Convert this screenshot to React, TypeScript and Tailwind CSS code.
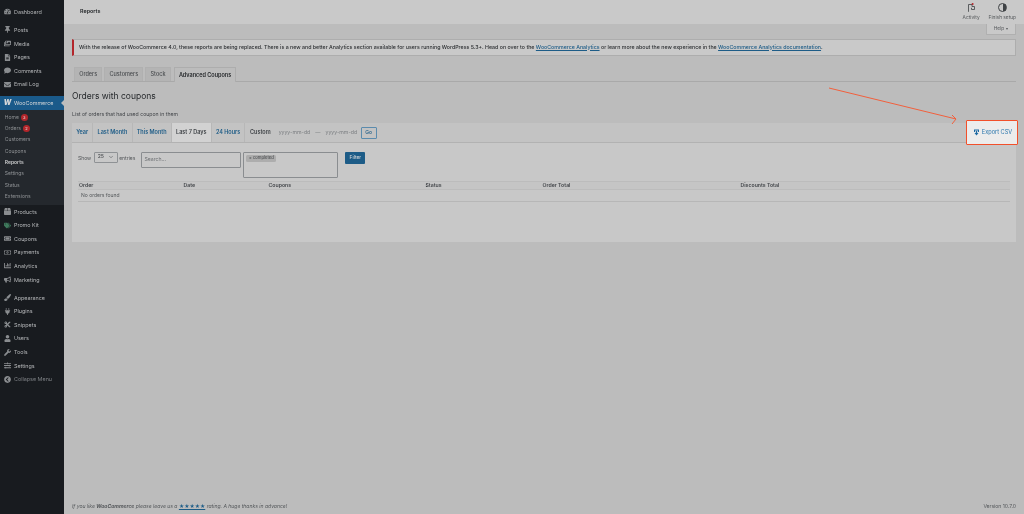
import { ChevronDown } from "lucide-react";
import type { IconType } from "react-icons";
import {
  FaBox,
  FaBullhorn,
  FaChartBar,
  FaComment,
  FaCut,
  FaEnvelope,
  FaFileAlt,
  FaImages,
  FaPaintBrush,
  FaPlug,
  FaRegMoneyBillAlt,
  FaSlidersH,
  FaTachometerAlt,
  FaThumbtack,
  FaTicketAlt,
  FaUser,
  FaWrench,
  FaChevronCircleLeft,
  FaTags,
} from "react-icons/fa";

function MenuItem({
  icon: Icon,
  label,
  dim,
  iconClass = "text-[#8a8d90]",
}: {
  icon: IconType;
  label: string;
  dim?: boolean;
  iconClass?: string;
}) {
  return (
    <div className={`flex h-[13.6px] items-center ${dim ? "text-[#7d8084]" : "text-[#b4b6b8]"}`}>
      <span className="flex w-[14px] justify-center pl-[1px]">
        <Icon className={`size-[7px] ${iconClass}`} />
      </span>
      <span className="text-[5.4px]">{label}</span>
    </div>
  );
}

function SubItem({ label, badge, active }: { label: string; badge?: string; active?: boolean }) {
  return (
    <div
      className={`flex h-[11.3px] items-center gap-[2px] pl-[4.8px] text-[5px] ${
        active ? "font-semibold text-[#c9cacb]" : "text-[#8f9295]"
      }`}
    >
      {label}
      {badge && (
        <span className="flex size-[7px] items-center justify-center rounded-full bg-[#b3262b] text-[4px] text-[#e6e6e6]">
          {badge}
        </span>
      )}
    </div>
  );
}

function RangeTab({ label, active }: { label: string; active?: boolean }) {
  return (
    <div
      className={`flex h-full items-center border-r border-[#b7b7b7] px-[4.2px] text-[5.5px] font-semibold ${
        active ? "bg-[#d2d2d2] text-[#3f4347]" : "text-[#1d5c87]"
      }`}
    >
      {label}
    </div>
  );
}

const navTabs = ["Orders", "Customers", "Stock"];

export default function App() {
  return (
    <div
      className="relative flex h-[514px] w-[1024px] overflow-hidden bg-[#bcbcbc] text-[#2c2f32] blur-[0.3px]"
      style={{ fontFamily: "Inter, 'Liberation Sans', sans-serif" }}
    >
      {/* sidebar */}
      <aside className="w-[64px] shrink-0 bg-[#181b1f] pt-[5px]">
        <MenuItem icon={FaTachometerAlt} label="Dashboard" />
        <div className="mt-[4.6px]">
          <MenuItem icon={FaThumbtack} label="Posts" />
          <MenuItem icon={FaImages} label="Media" />
          <MenuItem icon={FaFileAlt} label="Pages" />
          <MenuItem icon={FaComment} label="Comments" />
          <MenuItem icon={FaEnvelope} label="Email Log" />
        </div>
        <div className="relative mt-[4.8px] flex h-[13.6px] items-center bg-[#1a5a8a] text-[#d4d6d8]">
          <span className="flex w-[14px] justify-center pl-[1px] text-[7px] font-black italic leading-none text-[#d4d6d8]">
            W
          </span>
          <span className="text-[5.4px]">WooCommerce</span>
          <span className="absolute right-0 top-[3.6px] border-y-[3px] border-r-[3px] border-y-transparent border-r-[#bcbcbc]" />
        </div>
        <div className="bg-[#24282d] pb-[2.5px] pt-[2.4px]">
          <SubItem label="Home" badge="3" />
          <SubItem label="Orders" badge="2" />
          <SubItem label="Customers" />
          <SubItem label="Coupons" />
          <SubItem label="Reports" active />
          <SubItem label="Settings" />
          <SubItem label="Status" />
          <SubItem label="Extensions" />
        </div>
        <MenuItem icon={FaBox} label="Products" />
        <MenuItem icon={FaTags} label="Promo Kit" iconClass="text-[#3f7a5c]" />
        <MenuItem icon={FaTicketAlt} label="Coupons" />
        <MenuItem icon={FaRegMoneyBillAlt} label="Payments" />
        <MenuItem icon={FaChartBar} label="Analytics" />
        <MenuItem icon={FaBullhorn} label="Marketing" />
        <div className="mt-[4.5px]">
          <MenuItem icon={FaPaintBrush} label="Appearance" />
          <MenuItem icon={FaPlug} label="Plugins" />
          <MenuItem icon={FaCut} label="Snippets" />
          <MenuItem icon={FaUser} label="Users" />
          <MenuItem icon={FaWrench} label="Tools" />
          <MenuItem icon={FaSlidersH} label="Settings" />
          <MenuItem icon={FaChevronCircleLeft} label="Collapse Menu" dim />
        </div>
      </aside>

      <main className="flex min-w-0 flex-1 flex-col">
        {/* top bar */}
        <header className="flex h-[24px] shrink-0 items-center justify-between bg-[#c9c9c9] pl-[16px] pr-[8px]">
          <span className="-mt-[1px] text-[5.4px] font-semibold text-[#25282b]">Reports</span>
          <div className="flex gap-[9px] text-[4.8px] text-[#55585b]">
            <div className="flex flex-col items-center gap-[2px]">
              <svg className="size-[9px]" viewBox="0 0 9 9" fill="none" stroke="#3f4245" strokeWidth="0.8">
                <path d="M1.5 8.8V1.5H5V3.5H7.5V6.5H4.5V4.8" />
                <circle cx="5.6" cy="1" r="1" fill="#b3262b" stroke="none" />
              </svg>
              Activity
            </div>
            <div className="flex flex-col items-center gap-[2px]">
              <span className="size-[9px] rounded-full border border-[#3f4245] bg-[linear-gradient(90deg,transparent_50%,#3f4245_50%)]" />
              Finish setup
            </div>
          </div>
        </header>

        <div className="flex flex-1 flex-col px-[8px]">
          <div className="flex justify-end">
            <div className="flex h-[11px] w-[30px] items-center justify-center gap-[2px] rounded-b-[1px] border-x border-b border-[#b0b0b0] bg-[#c9c9c9] text-[4.8px] text-[#55585b]">
              Help
              <span className="border-x-[1.5px] border-t-[2px] border-x-transparent border-t-[#55585b]" />
            </div>
          </div>

          {/* notice */}
          <div className="mt-[4px] flex h-[17px] items-center border border-l-2 border-[#adadad] border-l-[#b3262b] bg-[#c9c9c9] pl-[5px] text-[5.27px] font-medium text-[#2c2f32]">
            <span>
              With the release of WooCommerce 4.0, these reports are being replaced. There is a new and better
              Analytics section available for users running WordPress 5.3+. Head on over to the{" "}
              <span className="text-[#1d5c87] underline">WooCommerce Analytics</span> or learn more about the new
              experience in the <span className="text-[#1d5c87] underline">WooCommerce Analytics documentation</span>.
            </span>
          </div>

          {/* tabs */}
          <div className="mt-[11px] flex h-[15px] items-end gap-[2px] border-b border-[#a9a9a9] pl-[2px]">
            {navTabs.map((tab) => (
              <div
                key={tab}
                className="flex h-[14px] items-center border border-b-0 border-[#b0b0b0] bg-[#b4b4b4] px-[4.2px] text-[5.5px] font-medium text-[#4a4d50]"
              >
                {tab}
              </div>
            ))}
            <div className="-mb-px ml-[1px] flex h-[15px] items-center border border-b-0 border-[#adadad] bg-[#bcbcbc] px-[4.2px] text-[5.5px] font-semibold text-[#1f2225]">
              Advanced Coupons
            </div>
          </div>

          <h1 className="mt-[8px] text-[8.5px] leading-[12px] text-[#25282b]">Orders with coupons</h1>
          <p className="mt-[9px] text-[5.15px] leading-[7px] text-[#43464a]">
            List of orders that had used coupon in them
          </p>

          {/* report panel */}
          <section className="mt-[5px] h-[119px] bg-[#c8c8c8]">
            <div className="flex h-[20px] items-center border-b border-[#b2b2b2] bg-[#c3c3c3]">
              <RangeTab label="Year" />
              <RangeTab label="Last Month" />
              <RangeTab label="This Month" />
              <RangeTab label="Last 7 Days" active />
              <RangeTab label="24 Hours" />
              <span className="ml-[4.5px] text-[5.5px] font-semibold text-[#3f4347]">Custom</span>
              <span className="ml-[8px] text-[5.2px] text-[#7a7d80]">yyyy-mm-dd</span>
              <span className="mx-[5px] text-[5.2px] text-[#7a7d80]">—</span>
              <span className="text-[5.2px] text-[#7a7d80]">yyyy-mm-dd</span>
              <span className="ml-[3.5px] flex h-[12px] w-[16px] items-center justify-center rounded-[1px] border border-[#5b8bad] text-[5px] font-medium text-[#1d5c87]">
                Go
              </span>
            </div>

            <div className="px-[6px]">
              <div className="mt-[8.5px] flex h-[26px] items-start">
                <span className="mt-[3.5px] text-[5px] text-[#55585b]">Show</span>
                <span className="ml-[2.5px] flex h-[11px] w-[24px] items-center justify-between rounded-[1px] border border-[#8f9295] px-[3px] text-[5.2px] text-[#43464a]">
                  25
                  <ChevronDown className="size-[6px]" />
                </span>
                <span className="ml-[1.5px] mt-[3.5px] text-[5px] text-[#55585b]">entries</span>
                <span className="ml-[6px] flex h-[16px] w-[100px] items-center rounded-[1px] border border-[#8a8d90] px-[2px] text-[5.2px] text-[#6f7275]">
                  Search...
                </span>
                <div className="ml-[2px] h-[26px] w-[95px] rounded-[1px] border border-[#8a8d90] p-[2px]">
                  <span className="flex h-[7px] w-[30px] items-center justify-center rounded-[1.5px] bg-[#adadad] text-[4.2px] text-[#3f4245]">
                    × completed
                  </span>
                </div>
                <span className="ml-[7px] flex h-[12px] w-[20px] items-center justify-center rounded-[1px] bg-[#1d5c87] text-[4.8px] font-medium text-[#d4d6d8]">
                  Filter
                </span>
              </div>

              <div className="mt-[3.5px] grid h-[9px] grid-cols-[104.5px_85px_157px_117px_198px_1fr] items-center border-y border-[#bcbcbc] bg-[#c5c5c5] pl-[1px] text-[5.2px] font-semibold text-[#43464a]">
                <span>Order</span>
                <span>Date</span>
                <span>Coupons</span>
                <span>Status</span>
                <span>Order Total</span>
                <span>Discounts Total</span>
              </div>
              <div className="flex h-[12px] items-center border-b border-[#b7b7b7] pl-[3px] text-[5px] text-[#55585b]">
                No orders found
              </div>
            </div>
          </section>

          {/* footer */}
          <footer className="mt-auto flex h-[11px] items-start justify-between text-[5.05px] text-[#55585b]">
            <span className="italic">
              If you like <b>WooCommerce</b> please leave us a{" "}
              <span className="not-italic text-[#1d5c87] underline">★★★★★</span> rating. A huge thanks in advance!
            </span>
            <span>Version 10.7.0</span>
          </footer>
        </div>
      </main>

      {/* annotation over the screenshot */}
      <div className="absolute left-[966px] top-[120px] flex h-[25px] w-[52px] items-center justify-center gap-[2px] rounded-[1px] border-[1.5px] border-[#f2502b] bg-[#ececec] pl-[1px] text-[5.6px] text-[#2a76ad]">
        <svg className="size-[7px]" viewBox="0 0 7 7" fill="#1d6aa3">
          <path d="M1 0.5H6V3H5V1.5H2V3H1Z" />
          <path d="M2.8 1.8H4.2V4H5.5L3.5 6.6L1.5 4H2.8Z" />
        </svg>
        Export CSV
      </div>
      <svg className="absolute left-[825px] top-[84px]" width="140" height="44" viewBox="0 0 140 44" fill="none">
        <path d="M4 4 L131 35 M127 31 L131 35 L127 40" stroke="#f2603c" strokeWidth="1" />
      </svg>
    </div>
  );
}
